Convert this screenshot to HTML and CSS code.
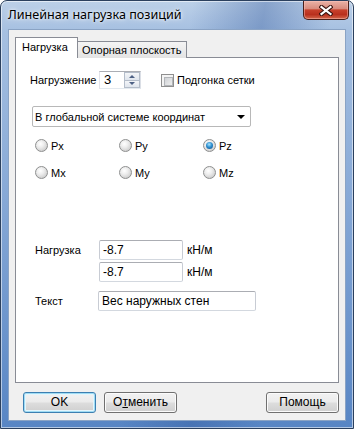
FILE: index.html
```html
<!DOCTYPE html>
<html lang="ru">
<head>
<meta charset="utf-8">
<title>Линейная нагрузка позиций</title>
<link rel="stylesheet" href="styles.css">
</head>
<body>
<div class="window">
  <div class="titlebar">
    <span class="title">Линейная нагрузка позиций</span>
    <div class="close">
      <svg width="14" height="11" viewBox="0 0 14 11">
        <path d="M2.5 2 L11.5 9 M11.5 2 L2.5 9" stroke="#3a1410" stroke-width="4.2" stroke-linecap="square"/>
        <path d="M2.5 2 L11.5 9 M11.5 2 L2.5 9" stroke="#ffffff" stroke-width="2.2" stroke-linecap="square"/>
      </svg>
    </div>
  </div>
  <div class="client">
    <div class="tabs">
      <div class="tab tab-active">Нагрузка</div>
      <div class="tab">Опорная плоскость</div>
    </div>
    <div class="panel">
      <div class="row-top">
        <span class="lbl-load">Нагрузжение</span>
        <div class="spin">
          <span class="spin-val">3</span>
          <div class="spin-btns">
            <span class="spin-btn"><span class="arr-up"></span></span>
            <span class="spin-btn"><span class="arr-down"></span></span>
          </div>
        </div>
        <div class="check"><span class="check-box"><span class="check-inner"></span></span><span>Подгонка сетки</span></div>
      </div>
      <div class="select">
        <span>В глобальной системе координат</span>
        <span class="select-arrow"></span>
      </div>
      <div class="radios">
        <div class="radio"><span class="radio-dot"></span><span>Px</span></div>
        <div class="radio"><span class="radio-dot"></span><span>Py</span></div>
        <div class="radio"><span class="radio-dot radio-on"></span><span>Pz</span></div>
        <div class="radio"><span class="radio-dot"></span><span>Mx</span></div>
        <div class="radio"><span class="radio-dot"></span><span>My</span></div>
        <div class="radio"><span class="radio-dot"></span><span>Mz</span></div>
      </div>
      <div class="form">
        <span class="flabel">Нагрузка</span>
        <div class="input input-short">-8.7</div>
        <span class="unit">кН/м</span>
        <span></span>
        <div class="input input-short">-8.7</div>
        <span class="unit">кН/м</span>
      </div>
      <div class="text-row">
        <span class="flabel">Текст</span>
        <div class="input input-long">Вес наружных стен</div>
      </div>
    </div>
    <div class="buttons">
      <div class="btn btn-default">OK</div>
      <div class="btn">О<u>т</u>менить</div>
      <div class="spacer"></div>
      <div class="btn">Помощь</div>
    </div>
  </div>
</div>
</body>
</html>
```

FILE: styles.css
```css
html, body {
  margin: 0;
  padding: 0;
}
body {
  width: 354px;
  height: 429px;
  overflow: hidden;
  background: #ffffff;
  font-family: "Liberation Sans", Arial, sans-serif;
  font-size: 11px;
  color: #000;
}
.window {
  box-sizing: border-box;
  width: 354px;
  height: 429px;
  border: 1px solid #2b405e;
  border-radius: 7px 7px 0 0;
  display: flex;
  flex-direction: column;
  background:
    linear-gradient(100deg, rgba(255,255,255,0) 45%, rgba(40,80,150,0.35) 62%, rgba(255,255,255,0) 78%),
    linear-gradient(180deg, #bcd0e8 0px, #a6c0e1 30px, #86a8d6 200px, #5785c4 429px);
  box-shadow: inset 0 0 0 1px rgba(255,255,255,0.55);
}
.titlebar {
  height: 28px;
  display: flex;
  justify-content: space-between;
  align-items: flex-start;
  padding: 0 4px 0 7px;
}
.title {
  font-family: "Noto Sans", "Liberation Sans", sans-serif;
  font-size: 12.6px;
  padding-top: 5px;
  text-shadow: 0 0 6px rgba(255,255,255,0.9), 0 0 3px rgba(255,255,255,0.9);
}
.close {
  box-sizing: border-box;
  width: 46px;
  height: 19px;
  border: 1px solid #4a1f1a;
  border-top: none;
  border-radius: 0 0 5px 5px;
  background: linear-gradient(180deg, #eab2a7 0%, #d98c7e 42%, #c7412c 50%, #b9301e 75%, #d3684c 100%);
  box-shadow: inset 0 0 0 1px rgba(255,200,190,0.45);
  display: flex;
  align-items: center;
  justify-content: center;
}
.client {
  flex: 1;
  margin: 0 7px 7px 7px;
  border: 1px solid #8aa3c4;
  background: #f0f0f0;
  padding: 7px 6px 0 6px;
  display: flex;
  flex-direction: column;
}
.tabs {
  display: flex;
  align-items: flex-end;
  position: relative;
  z-index: 1;
  margin-bottom: -1px;
}
.tab {
  box-sizing: border-box;
  height: 17px;
  border: 1px solid #898c95;
  border-bottom: none;
  background: linear-gradient(180deg, #f4f4f4, #e3e3e3);
  padding: 1px 5px 0 4px;
  line-height: 15px;
  margin-left: -1px;
}
.tab-active {
  height: 21px;
  background: #ffffff;
  padding: 2px 7px 0 6px;
  margin-left: 0;
  position: relative;
  z-index: 2;
  width: 63px;
}
.panel {
  flex: 1;
  border: 1px solid #898c95;
  background: #ffffff;
  padding: 13px 0 0 14px;
}
.row-top {
  display: flex;
  align-items: center;
  height: 18px;
}
.lbl-load {
  width: 69px;
}
.spin {
  box-sizing: border-box;
  width: 42px;
  height: 18px;
  border: 1px solid #abadb3;
  border-color: #abadb3 #dbdfe6 #e3e9ef #e2e3ea;
  display: flex;
}
.spin-val {
  flex: 1;
  padding: 1px 0 0 4px;
  font-size: 13px;
  line-height: 14px;
}
.spin-btns {
  width: 16px;
  display: flex;
  flex-direction: column;
}
.spin-btn {
  flex: 1;
  border: 1px solid #b4bdca;
  background: linear-gradient(180deg, #f3f5f8, #dfe5ed);
  display: flex;
  align-items: center;
  justify-content: center;
}
.spin-btn + .spin-btn {
  border-top: none;
}
.arr-up, .arr-down {
  width: 0;
  height: 0;
  border-left: 3px solid transparent;
  border-right: 3px solid transparent;
}
.arr-up { border-bottom: 3px solid #4d6185; }
.arr-down { border-top: 3px solid #4d6185; }
.check {
  margin-left: 20px;
  display: flex;
  align-items: center;
  gap: 3px;
}
.check-box {
  box-sizing: border-box;
  width: 13px;
  height: 13px;
  border: 1px solid #8f8f8f;
  background: #f4f4f4;
  padding: 2px;
}
.check-inner {
  display: block;
  width: 7px;
  height: 7px;
  border: 1px solid #b2b5b9;
  background: linear-gradient(135deg, #cfd2d6, #eeeeee);
}
.select {
  box-sizing: border-box;
  width: 219px;
  height: 21px;
  margin: 17px 0 0 2px;
  border: 1px solid #b8b8b8;
  border-radius: 2px;
  background: #ffffff;
  display: flex;
  align-items: center;
  justify-content: space-between;
  padding: 0 5px 0 2px;
}
.select-arrow {
  width: 0;
  height: 0;
  border-left: 4px solid transparent;
  border-right: 4px solid transparent;
  border-top: 4px solid #000;
}
.radios {
  display: grid;
  grid-template-columns: 84px 84px 84px;
  row-gap: 14px;
  margin: 12px 0 0 5px;
}
.radio {
  display: flex;
  align-items: center;
  gap: 3px;
  height: 13px;
}
.radio-dot {
  box-sizing: border-box;
  width: 13px;
  height: 13px;
  border-radius: 50%;
  border: 1px solid #8e8f8f;
  background: radial-gradient(circle at 40% 35%, #ffffff 0%, #eeeeee 35%, #c9c9c9 85%);
  display: flex;
  align-items: center;
  justify-content: center;
}
.radio-on::after {
  content: "";
  width: 7px;
  height: 7px;
  border-radius: 50%;
  background: radial-gradient(circle at 45% 35%, #a8e6ff 0%, #2f8fd0 45%, #0b4a86 100%);
}
.form {
  display: grid;
  grid-template-columns: 64px 84px auto;
  row-gap: 2px;
  align-items: center;
  margin: 61px 0 0 5px;
}
.flabel {
  display: block;
}
.input {
  box-sizing: border-box;
  height: 20px;
  border: 1px solid #abadb3;
  border-color: #abadb3 #c8ccd4 #d3d8df #c8ccd4;
  border-radius: 2px;
  background: #fff;
  padding: 0 3px;
  line-height: 18px;
  font-size: 12px;
}
.input-short {
  width: 84px;
}
.unit {
  margin-left: 4px;
  font-size: 12px;
}
.text-row {
  display: flex;
  align-items: center;
  margin: 9px 0 0 5px;
}
.text-row .flabel {
  width: 63px;
}
.input-long {
  width: 158px;
}
.buttons {
  display: flex;
  height: 21px;
  margin: 9px 0 7px 8px;
}
.spacer {
  flex: 1;
}
.btn {
  box-sizing: border-box;
  width: 73px;
  height: 21px;
  border: 1px solid #707070;
  border-radius: 3px;
  background: linear-gradient(180deg, #f2f2f2 0%, #ebebeb 48%, #dddddd 52%, #cfcfcf 100%);
  box-shadow: inset 0 0 0 1px #fbfbfb;
  text-align: center;
  line-height: 19px;
  font-size: 12px;
}
.btn + .btn {
  margin-left: 8px;
}
.btn-default {
  border-color: #3c7fb1;
  box-shadow: inset 0 0 0 1px #9fdcf4, inset 0 0 0 2px #e4f5fc;
}
u {
  text-decoration: underline;
}
```
